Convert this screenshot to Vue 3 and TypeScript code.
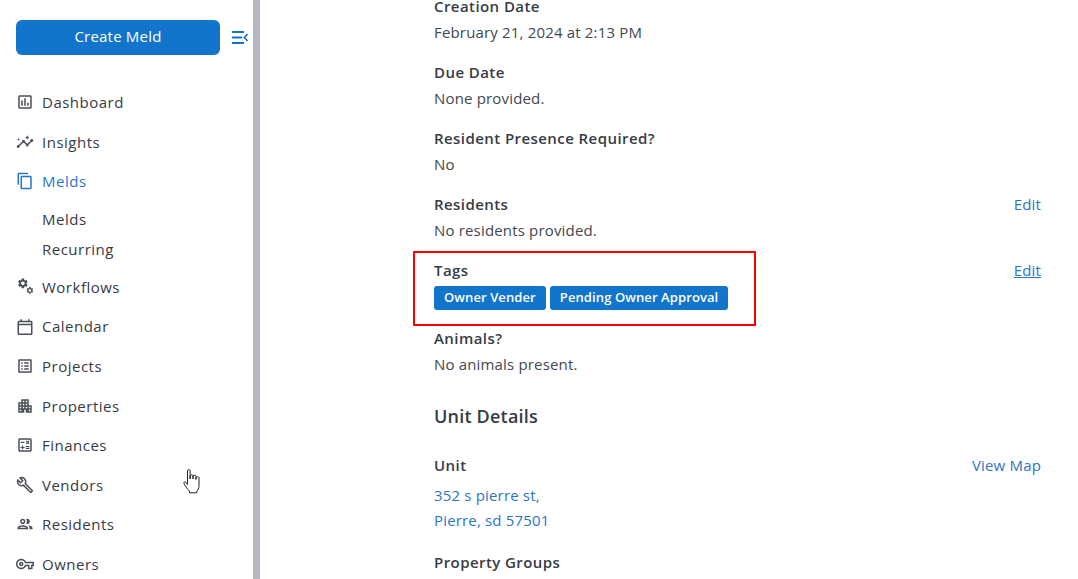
<script setup lang="ts">
interface NavItem {
  label: string
  paths: string[]
  active?: boolean
  children?: string[]
}

const gear =
  'M19.14 12.94c.04-.3.06-.61.06-.94 0-.32-.02-.64-.07-.94l2.03-1.58c.18-.14.23-.41.12-.61l-1.92-3.32c-.12-.22-.37-.29-.59-.22l-2.39.96c-.5-.38-1.03-.7-1.62-.94l-.36-2.54c-.04-.24-.24-.41-.48-.41h-3.84c-.24 0-.43.17-.47.41l-.36 2.54c-.59.24-1.13.57-1.62.94l-2.39-.96c-.22-.08-.47 0-.59.22L2.74 8.87c-.12.21-.08.47.12.61l2.03 1.58c-.05.3-.09.63-.09.94s.02.64.07.94l-2.03 1.58c-.18.14-.23.41-.12.61l1.92 3.32c.12.22.37.29.59.22l2.39-.96c.5.38 1.03.7 1.62.94l.36 2.54c.05.24.24.41.48.41h3.84c.24 0 .44-.17.47-.41l.36-2.54c.59-.24 1.13-.56 1.62-.94l2.39.96c.22.08.47 0 .59-.22l1.92-3.32c.12-.22.07-.47-.12-.61l-2.01-1.58zM12 15.6c-1.98 0-3.6-1.62-3.6-3.6s1.62-3.6 3.6-3.6 3.6 1.62 3.6 3.6-1.62 3.6-3.6 3.6z'

const navItems: NavItem[] = [
  {
    label: 'Dashboard',
    paths: ['M19 3H5c-1.1 0-2 .9-2 2v14c0 1.1.9 2 2 2h14c1.1 0 2-.9 2-2V5c0-1.1-.9-2-2-2zm0 16H5V5h14v14zM7 10h2v7H7zm4-3h2v10h-2zm4 6h2v4h-2z']
  },
  {
    label: 'Insights',
    paths: [
      'M21 8c-1.45 0-2.26 1.44-1.93 2.51l-3.55 3.56c-.3-.09-.74-.09-1.04 0l-2.55-2.55C12.27 10.45 11.46 9 10 9c-1.45 0-2.27 1.44-1.93 2.52l-4.56 4.55C2.44 15.74 1 16.55 1 18c0 1.1.9 2 2 2 1.45 0 2.26-1.44 1.93-2.51l4.55-4.56c.3.09.74.09 1.04 0l2.55 2.55C12.73 16.55 13.54 18 15 18c1.45 0 2.27-1.44 1.93-2.52l3.56-3.55c1.07.33 2.51-.48 2.51-1.93 0-1.1-.9-2-2-2z',
      'M15 9l.94-2.07L18 6l-2.06-.93L15 3l-.92 2.07L12 6l2.08.93zM3.5 11L4 9l2-.5L4 8l-.5-2L3 8l-2 .5L3 9z'
    ]
  },
  {
    label: 'Melds',
    active: true,
    children: ['Melds', 'Recurring'],
    paths: ['M16 1H4c-1.1 0-2 .9-2 2v14h2V3h12V1zm3 4H8c-1.1 0-2 .9-2 2v14c0 1.1.9 2 2 2h11c1.1 0 2-.9 2-2V7c0-1.1-.9-2-2-2zm0 16H8V7h11v14z']
  },
  { label: 'Workflows', paths: [] },
  {
    label: 'Calendar',
    paths: ['M20 5h-2V3h-2v2H8V3H6v2H4c-1.1 0-2 .9-2 2v15c0 1.1.9 2 2 2h16c1.1 0 2-.9 2-2V7c0-1.1-.9-2-2-2zm0 17H4V11h16v11zm0-13H4V7h16v2z']
  },
  {
    label: 'Projects',
    paths: ['M19 5v14H5V5h14m1.1-2H3.9c-.5 0-.9.4-.9.9v16.2c0 .4.4.9.9.9h16.2c.4 0 .9-.5.9-.9V3.9c0-.5-.5-.9-.9-.9zM11 7h6v2h-6V7zm0 4h6v2h-6v-2zm0 4h6v2h-6zM7 7h2v2H7zm0 4h2v2H7zm0 4h2v2H7z']
  },
  {
    label: 'Properties',
    paths: ['M17 11V3H7v4H3v14h8v-4h2v4h8V11h-4zM7 19H5v-2h2v2zm0-4H5v-2h2v2zm0-4H5V9h2v2zm4 4H9v-2h2v2zm0-4H9V9h2v2zm0-4H9V5h2v2zm4 8h-2v-2h2v2zm0-4h-2V9h2v2zm0-4h-2V5h2v2zm4 12h-2v-2h2v2zm0-4h-2v-2h2v2z']
  },
  {
    label: 'Finances',
    paths: [
      'M19 3H5c-1.1 0-2 .9-2 2v14c0 1.1.9 2 2 2h14c1.1 0 2-.9 2-2V5c0-1.1-.9-2-2-2zm0 16H5V5h14v14z',
      'M6.25 7.72h5v1.5h-5zM13 15.75h5v1.5h-5zm0-2.5h5v1.5h-5zM8 18h1.5v-2h2v-1.5h-2v-2H8v2H6V16h2zm6.09-7.05l1.41-1.41 1.41 1.41 1.06-1.06-1.41-1.42 1.41-1.41L16.91 6 15.5 7.41 14.09 6l-1.06 1.06 1.41 1.41-1.41 1.42z'
    ]
  },
  {
    label: 'Vendors',
    paths: ['M22.61 18.99l-9.08-9.08c.93-2.34.45-5.1-1.44-7C9.79.61 6.21.4 3.66 2.26L7.5 6.11 6.08 7.52 2.25 3.69C.39 6.23.6 9.82 2.9 12.11c1.86 1.86 4.57 2.35 6.89 1.48l9.11 9.11c.39.39 1.02.39 1.41 0l2.3-2.3c.4-.38.4-1.01 0-1.41zm-3 1.6l-9.46-9.46c-.61.45-1.29.72-2 .82-1.36.2-2.79-.21-3.83-1.25C3.37 9.76 2.93 8.5 3 7.26l3.09 3.09 4.24-4.24-3.09-3.09c1.24-.07 2.49.37 3.44 1.31 1.08 1.08 1.49 2.57 1.24 3.96-.12.71-.42 1.37-.88 1.96l9.45 9.45-.88.88z']
  },
  {
    label: 'Residents',
    paths: ['M9 13.75c-2.34 0-7 1.17-7 3.5V19h14v-1.75c0-2.33-4.66-3.5-7-3.5zM4.34 17c.84-.58 2.87-1.25 4.66-1.25s3.82.67 4.66 1.25H4.34zM9 12c1.93 0 3.5-1.57 3.5-3.5S10.93 5 9 5 5.5 6.57 5.5 8.5 7.07 12 9 12zm0-5c.83 0 1.5.67 1.5 1.5S9.83 10 9 10s-1.5-.67-1.5-1.5S8.17 7 9 7zm7.04 6.81c1.16.84 1.96 1.96 1.96 3.44V19h4v-1.75c0-2.02-3.5-3.17-5.96-3.44zM15 12c1.93 0 3.5-1.57 3.5-3.5S16.93 5 15 5c-.54 0-1.04.13-1.5.35.63.89 1 1.98 1 3.15s-.37 2.26-1 3.15c.46.22.96.35 1.5.35z']
  },
  {
    label: 'Owners',
    paths: ['M22 19h-6v-4h-2.68c-1.14 2.42-3.6 4-6.32 4-3.86 0-7-3.14-7-7s3.14-7 7-7c2.72 0 5.17 1.58 6.32 4H24v6h-2v4zm-4-2h2v-4h2v-2H11.94l-.23-.67C11.01 8.34 9.11 7 7 7c-2.76 0-5 2.24-5 5s2.24 5 5 5c2.11 0 4.01-1.34 4.71-3.33l.23-.67H18v4zM7 15c-1.65 0-3-1.35-3-3s1.35-3 3-3 3 1.35 3 3-1.35 3-3 3zm0-4c-.55 0-1 .45-1 1s.45 1 1 1 1-.45 1-1-.45-1-1-1z']
  }
]

const tags = ['Owner Vender', 'Pending Owner Approval']
</script>

<template>
  <div class="page">
    <aside class="sidebar">
      <div class="top">
        <button class="create">Create Meld</button>
        <svg class="collapse" viewBox="0 0 16 13" width="16" height="13">
          <path d="M0 1h12M0 6.500h10M0 12h12" stroke="#1175cc" stroke-width="2" fill="none" />
          <path d="M15.500 3 12.300 6.500l3.200 3.500" stroke="#1175cc" stroke-width="1.600" fill="none" />
        </svg>
      </div>
      <nav class="nav">
        <template v-for="item in navItems" :key="item.label">
          <div class="nav-row" :class="{ active: item.active }">
            <svg class="nav-icon" viewBox="0 0 24 24" width="18" height="18">
              <template v-if="item.label === 'Workflows'">
                <path :d="gear" fill-rule="evenodd" transform="translate(1 -1) scale(.68)" />
                <path :d="gear" fill-rule="evenodd" transform="translate(13 11) scale(.46)" />
              </template>
              <path v-for="d in item.paths" :key="d" :d="d" />
            </svg>
            <span>{{ item.label }}</span>
          </div>
          <div v-if="item.children" class="sub-list">
            <div v-for="child in item.children" :key="child" class="sub-row">{{ child }}</div>
          </div>
        </template>
      </nav>
    </aside>
    <div class="scrollbar"></div>
    <main class="main">
      <section class="field">
        <div class="label">Creation Date</div>
        <div class="value">February 21, 2024 at 2:13 PM</div>
      </section>
      <section class="field">
        <div class="label">Due Date</div>
        <div class="value">None provided.</div>
      </section>
      <section class="field">
        <div class="label">Resident Presence Required?</div>
        <div class="value">No</div>
      </section>
      <section class="field">
        <div class="label-row">
          <div class="label">Residents</div>
          <a class="link">Edit</a>
        </div>
        <div class="value">No residents provided.</div>
      </section>
      <section class="field tags-field">
        <div class="label-row">
          <div class="label">Tags</div>
          <a class="link underlined">Edit</a>
        </div>
        <div class="tags">
          <span v-for="tag in tags" :key="tag" class="tag">{{ tag }}</span>
        </div>
        <div class="highlight"></div>
      </section>
      <section class="field">
        <div class="label">Animals?</div>
        <div class="value">No animals present.</div>
      </section>
      <h2 class="heading">Unit Details</h2>
      <section class="field address-field">
        <div class="label-row">
          <div class="label">Unit</div>
          <a class="link">View Map</a>
        </div>
        <div class="address">
          <a class="link">352 s pierre st,</a>
          <a class="link">Pierre, sd 57501</a>
        </div>
      </section>
      <section class="field">
        <div class="label">Property Groups</div>
      </section>
    </main>
    <svg class="cursor" viewBox="0 0 18 25" width="18" height="25">
      <path
        d="M4.500 1.800c0-1.500 2.600-1.500 2.600 0V10V6.500c0-1 2.900-1 2.900 0V10V7c0-1 3-1 3 0V10.500V8.500c0-1 3-1 3 0V17c0 2.500-1.200 4-2.200 5.200V23.800H6.500V22C4.500 20.500 2.500 17.500 1 14.500c-.6-1.200.9-2.300 1.900-1.200L4.500 15.500z"
        fill="#fff"
        stroke="#222"
        stroke-width="1"
        stroke-linejoin="round"
      />
    </svg>
  </div>
</template>

<style scoped>
.page {
  position: relative;
  display: flex;
  height: 579px;
  overflow: hidden;
  background: #fff;
  color: #373b45;
  font-family: "Open Sans", sans-serif;
  font-size: 15px;
}

.sidebar {
  width: 253px;
  flex-shrink: 0;
  padding: 20px 0 0 16px;
  box-sizing: border-box;
}

.top {
  display: flex;
  align-items: center;
  gap: 12px;
  margin-bottom: 27.500px;
}

.create {
  width: 204px;
  height: 35px;
  padding: 0 0 4px;
  border: none;
  border-radius: 6px;
  background: #1175cc;
  color: #fff;
  font: inherit;
  letter-spacing: 0.2px;
}

.collapse {
  flex-shrink: 0;
}

.nav-row {
  display: flex;
  align-items: center;
  gap: 8px;
  height: 39.600px;
  letter-spacing: 0.5px;
}

.nav-icon {
  flex-shrink: 0;
  fill: #4b4f58;
}

.active {
  color: #2a76c6;
}

.active .nav-icon {
  fill: #2a76c6;
}

.sub-list {
  margin: 3px 0 2.700px 26px;
  letter-spacing: 0.5px;
}

.sub-row {
  height: 30px;
  line-height: 30px;
}

.scrollbar {
  width: 7px;
  flex-shrink: 0;
  background: #b4b6c0;
}

.main {
  flex: 1;
  margin-top: -7px;
  padding: 0 37px 0 174px;
  line-height: 26px;
}

.field {
  margin-bottom: 14px;
}

.label-row {
  display: flex;
  justify-content: space-between;
}

.label {
  font-weight: 600;
  letter-spacing: 0.43px;
}

.value {
  color: #43474f;
  letter-spacing: 0.17px;
}

.link {
  color: #2a76c6;
  letter-spacing: 0.17px;
}

.underlined {
  text-decoration: underline;
}

.address {
  display: flex;
  flex-direction: column;
  padding-top: 5px;
  line-height: 25px;
}

.address-field {
  margin-bottom: 16px;
}

.tags-field {
  position: relative;
  margin-bottom: 15px;
}

.tags {
  display: flex;
  gap: 4px;
  padding-top: 3px;
}

.tag {
  padding: 0 10px;
  height: 24px;
  line-height: 23px;
  border-radius: 3px;
  background: #1175cc;
  color: #fff;
  font-size: 13px;
  font-weight: 600;
  letter-spacing: 0.1px;
}

.highlight {
  position: absolute;
  left: -21px;
  top: -6px;
  width: 343px;
  height: 75px;
  box-sizing: border-box;
  border: 2px solid #f00;
  pointer-events: none;
}

.heading {
  margin: 26px 0 23px;
  font-size: 18px;
  font-weight: 600;
  line-height: 26px;
  letter-spacing: 0.2px;
}

.cursor {
  position: absolute;
  left: 183px;
  top: 469px;
}
</style>
